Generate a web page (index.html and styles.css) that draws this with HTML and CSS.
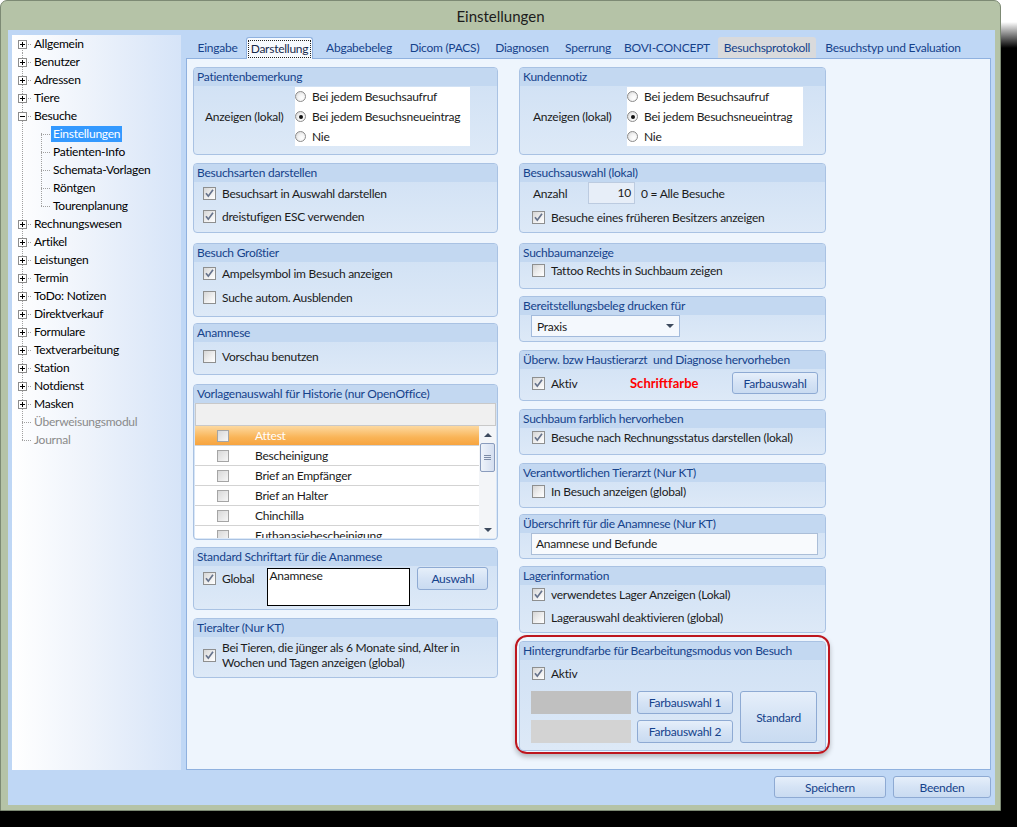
FILE: index.html
```html
<!DOCTYPE html>
<html lang="de">
<head>
<meta charset="utf-8">
<title>Einstellungen</title>
<link rel="stylesheet" href="styles.css">
</head>
<body>
<div class="window">
  <div class="titlebar">Einstellungen</div>
  <div class="client">
    <div class="main">
      <nav class="tree">
        <div class="node"><span class="gut first"><span class="pm"></span></span><span class="lbl">Allgemein</span></div>
        <div class="node"><span class="gut"><span class="pm"></span></span><span class="lbl">Benutzer</span></div>
        <div class="node"><span class="gut"><span class="pm"></span></span><span class="lbl">Adressen</span></div>
        <div class="node"><span class="gut"><span class="pm"></span></span><span class="lbl">Tiere</span></div>
        <div class="node"><span class="gut"><span class="pm minus"></span></span><span class="lbl">Besuche</span></div>
        <div class="node"><span class="gut pass"></span><span class="gut2 cfirst"></span><span class="lbl sel">Einstellungen</span></div>
        <div class="node"><span class="gut pass"></span><span class="gut2"></span><span class="lbl">Patienten-Info</span></div>
        <div class="node"><span class="gut pass"></span><span class="gut2"></span><span class="lbl">Schemata-Vorlagen</span></div>
        <div class="node"><span class="gut pass"></span><span class="gut2"></span><span class="lbl">Röntgen</span></div>
        <div class="node"><span class="gut pass"></span><span class="gut2 last"></span><span class="lbl">Tourenplanung</span></div>
        <div class="node"><span class="gut"><span class="pm"></span></span><span class="lbl">Rechnungswesen</span></div>
        <div class="node"><span class="gut"><span class="pm"></span></span><span class="lbl">Artikel</span></div>
        <div class="node"><span class="gut"><span class="pm"></span></span><span class="lbl">Leistungen</span></div>
        <div class="node"><span class="gut"><span class="pm"></span></span><span class="lbl">Termin</span></div>
        <div class="node"><span class="gut"><span class="pm"></span></span><span class="lbl">ToDo: Notizen</span></div>
        <div class="node"><span class="gut"><span class="pm"></span></span><span class="lbl">Direktverkauf</span></div>
        <div class="node"><span class="gut"><span class="pm"></span></span><span class="lbl">Formulare</span></div>
        <div class="node"><span class="gut"><span class="pm"></span></span><span class="lbl">Textverarbeitung</span></div>
        <div class="node"><span class="gut"><span class="pm"></span></span><span class="lbl">Station</span></div>
        <div class="node"><span class="gut"><span class="pm"></span></span><span class="lbl">Notdienst</span></div>
        <div class="node"><span class="gut"><span class="pm"></span></span><span class="lbl">Masken</span></div>
        <div class="node"><span class="gut"></span><span class="lbl dim">Überweisungsmodul</span></div>
        <div class="node"><span class="gut last"></span><span class="lbl dim">Journal</span></div>
      </nav>

      <div class="tabctl">
        <div class="tabstrip">
          <span class="tab t-eingabe">Eingabe</span>
          <span class="tab t-darst active"><span class="focus">Darstellung</span></span>
          <span class="tab t-abgabe">Abgabebeleg</span>
          <span class="tab t-dicom">Dicom (PACS)</span>
          <span class="tab t-diag">Diagnosen</span>
          <span class="tab t-sperr">Sperrung</span>
          <span class="tab t-bovi">BOVI-CONCEPT</span>
          <span class="tab t-proto hover">Besuchsprotokoll</span>
          <span class="tab t-typ">Besuchstyp und Evaluation</span>
        </div>
        <div class="page">
          <div class="col col-left">
            <section class="grp h88">
              <div class="gh">Patientenbemerkung</div>
              <div class="radiobody">
                <span class="rlabel rl-left">Anzeigen (lokal)</span>
                <div class="rbox">
                  <div class="rrow"><span class="radio"></span>Bei jedem Besuchsaufruf</div>
                  <div class="rrow"><span class="radio on"></span>Bei jedem Besuchsneueintrag</div>
                  <div class="rrow"><span class="radio"></span>Nie</div>
                </div>
              </div>
            </section>

            <section class="grp h70 mt8">
              <div class="gh">Besuchsarten darstellen</div>
              <div class="gb gb-l pt3 gap6">
                <div class="cbrow"><span class="cb on"><svg viewBox="0 0 11 11" width="11" height="11"><path d="M2 5.3 L4.3 8.2 L9 1.8" fill="none" stroke="#66738c" stroke-width="1.7"/></svg></span>Besuchsart in Auswahl darstellen</div>
                <div class="cbrow"><span class="cb on"><svg viewBox="0 0 11 11" width="11" height="11"><path d="M2 5.3 L4.3 8.2 L9 1.8" fill="none" stroke="#66738c" stroke-width="1.7"/></svg></span>dreistufigen ESC verwenden</div>
              </div>
            </section>

            <section class="grp h74 mt10">
              <div class="gh">Besuch Großtier</div>
              <div class="gb gb-l pt3 gap7">
                <div class="cbrow"><span class="cb on"><svg viewBox="0 0 11 11" width="11" height="11"><path d="M2 5.3 L4.3 8.2 L9 1.8" fill="none" stroke="#66738c" stroke-width="1.7"/></svg></span>Ampelsymbol im Besuch anzeigen</div>
                <div class="cbrow"><span class="cb"></span>Suche autom. Ausblenden</div>
              </div>
            </section>

            <section class="grp h52 mt6">
              <div class="gh">Anamnese</div>
              <div class="gb gb-l pt6">
                <div class="cbrow"><span class="cb"></span>Vorschau benutzen</div>
              </div>
            </section>

            <section class="grp h156 mt9">
              <div class="gh">Vorlagenauswahl für Historie (nur OpenOffice)</div>
              <div class="list">
                <div class="lhead"></div>
                <div class="lbody">
                  <div class="lrows">
                    <div class="lrow sel"><span class="lcb"></span><span class="ltext">Attest</span></div>
                    <div class="lrow"><span class="lcb"></span><span class="ltext">Bescheinigung</span></div>
                    <div class="lrow"><span class="lcb"></span><span class="ltext">Brief an Empfänger</span></div>
                    <div class="lrow"><span class="lcb"></span><span class="ltext">Brief an Halter</span></div>
                    <div class="lrow"><span class="lcb"></span><span class="ltext">Chinchilla</span></div>
                    <div class="lrow"><span class="lcb"></span><span class="ltext">Euthanasiebescheinigung</span></div>
                  </div>
                  <div class="vscroll">
                    <span class="sbtn"><span class="tri up"></span></span>
                    <span class="thumb"></span>
                    <span class="strack"></span>
                    <span class="sbtn"><span class="tri down"></span></span>
                  </div>
                </div>
              </div>
            </section>

            <section class="grp h63 mt7">
              <div class="gh">Standard Schriftart für die Ananmese</div>
              <div class="gb gb-l fontrow">
                <div class="cbrow tall"><span class="cb on"><svg viewBox="0 0 11 11" width="11" height="11"><path d="M2 5.3 L4.3 8.2 L9 1.8" fill="none" stroke="#66738c" stroke-width="1.7"/></svg></span>Global</div>
                <div class="fontbox">Anamnese</div>
                <button class="btn b-auswahl">Auswahl</button>
              </div>
            </section>

            <section class="grp h60 mt8">
              <div class="gh">Tieralter (Nur KT)</div>
              <div class="gb gb-l pt3">
                <div class="cbrow two"><span class="cb on"><svg viewBox="0 0 11 11" width="11" height="11"><path d="M2 5.3 L4.3 8.2 L9 1.8" fill="none" stroke="#66738c" stroke-width="1.7"/></svg></span><span>Bei Tieren, die jünger als 6 Monate sind, Alter in<br>Wochen und Tagen anzeigen (global)</span></div>
              </div>
            </section>
          </div>

          <div class="col col-right">
            <section class="grp h88">
              <div class="gh">Kundennotiz</div>
              <div class="radiobody">
                <span class="rlabel rl-right">Anzeigen (lokal)</span>
                <div class="rbox rbox-r">
                  <div class="rrow"><span class="radio"></span>Bei jedem Besuchsaufruf</div>
                  <div class="rrow"><span class="radio on"></span>Bei jedem Besuchsneueintrag</div>
                  <div class="rrow"><span class="radio"></span>Nie</div>
                </div>
              </div>
            </section>

            <section class="grp h70 mt8">
              <div class="gh">Besuchsauswahl (lokal)</div>
              <div class="gb gb-r">
                <div class="anzrow">
                  <span class="anzlabel">Anzahl</span>
                  <span class="numbox">10</span>
                  <span class="anzhint">0 = Alle Besuche</span>
                </div>
                <div class="cbrow mt5"><span class="cb on"><svg viewBox="0 0 11 11" width="11" height="11"><path d="M2 5.3 L4.3 8.2 L9 1.8" fill="none" stroke="#66738c" stroke-width="1.7"/></svg></span>Besuche eines früheren Besitzers anzeigen</div>
              </div>
            </section>

            <section class="grp h46 mt10">
              <div class="gh">Suchbaumanzeige</div>
              <div class="gb gb-r">
                <div class="cbrow"><span class="cb"></span>Tattoo Rechts in Suchbaum zeigen</div>
              </div>
            </section>

            <section class="grp h46 mt7">
              <div class="gh">Bereitstellungsbeleg drucken für</div>
              <div class="gb gb-r11">
                <div class="select"><span>Praxis</span><span class="tri down sel-arrow"></span></div>
              </div>
            </section>

            <section class="grp h51 mt8">
              <div class="gh">Überw. bzw Haustierarzt&nbsp; und Diagnose hervorheben</div>
              <div class="gb gb-r pt3">
                <div class="colorrow">
                  <div class="cbrow aktiv"><span class="cb on"><svg viewBox="0 0 11 11" width="11" height="11"><path d="M2 5.3 L4.3 8.2 L9 1.8" fill="none" stroke="#66738c" stroke-width="1.7"/></svg></span>Aktiv</div>
                  <span class="redtext">Schriftfarbe</span>
                  <button class="btn b-farb">Farbauswahl</button>
                </div>
              </div>
            </section>

            <section class="grp h46 mt8">
              <div class="gh">Suchbaum farblich hervorheben</div>
              <div class="gb gb-r pt1">
                <div class="cbrow"><span class="cb on"><svg viewBox="0 0 11 11" width="11" height="11"><path d="M2 5.3 L4.3 8.2 L9 1.8" fill="none" stroke="#66738c" stroke-width="1.7"/></svg></span>Besuche nach Rechnungsstatus darstellen (lokal)</div>
              </div>
            </section>

            <section class="grp h45 mt8">
              <div class="gh">Verantwortlichen Tierarzt (Nur KT)</div>
              <div class="gb gb-r pt1">
                <div class="cbrow"><span class="cb"></span>In Besuch anzeigen (global)</div>
              </div>
            </section>

            <section class="grp h45 mt6">
              <div class="gh">Überschrift für die Anamnese (Nur KT)</div>
              <div class="gb gb-r11">
                <div class="textin">Anamnese und Befunde</div>
              </div>
            </section>

            <section class="grp h67 mt7">
              <div class="gh">Lagerinformation</div>
              <div class="gb gb-r pt1 gap6">
                <div class="cbrow"><span class="cb on"><svg viewBox="0 0 11 11" width="11" height="11"><path d="M2 5.3 L4.3 8.2 L9 1.8" fill="none" stroke="#66738c" stroke-width="1.7"/></svg></span>verwendetes Lager Anzeigen (Lokal)</div>
                <div class="cbrow"><span class="cb"></span>Lagerauswahl deaktivieren (global)</div>
              </div>
            </section>

            <div class="highlight">
              <section class="grp h110">
                <div class="gh">Hintergrundfarbe für Bearbeitungsmodus von Besuch</div>
                <div class="gb gb-r pt5">
                  <div class="cbrow"><span class="cb on"><svg viewBox="0 0 11 11" width="11" height="11"><path d="M2 5.3 L4.3 8.2 L9 1.8" fill="none" stroke="#66738c" stroke-width="1.7"/></svg></span>Aktiv</div>
                  <div class="bgcolors">
                    <span class="swatch sw1"></span>
                    <button class="btn b-f1">Farbauswahl 1</button>
                    <button class="btn b-std">Standard</button>
                    <span class="swatch sw2"></span>
                    <button class="btn b-f2">Farbauswahl 2</button>
                  </div>
                </div>
              </section>
            </div>
          </div>
        </div>
      </div>
    </div>
    <div class="footer">
      <button class="btn b-save">Speichern</button>
      <button class="btn b-end">Beenden</button>
    </div>
  </div>
</div>
</body>
</html>
```

FILE: styles.css
```css
* { box-sizing: border-box; }
html, body { margin: 0; padding: 0; }
body {
  width: 1017px;
  height: 827px;
  overflow: hidden;
  background: linear-gradient(#ffffff 0, #ffffff 22px, #000000 48px);
  font-family: Lato, "Liberation Sans", sans-serif;
  font-size: 12px;
  letter-spacing: -0.25px;
  color: #1b1b1b;
}

/* window frame */
.window {
  width: 1001px;
  height: 811px;
  background: #b5c3a7;
  border: 1px solid #7d8a74;
  border-radius: 7px 7px 0 0;
  display: flex;
  flex-direction: column;
}
.titlebar {
  height: 29px;
  line-height: 30px;
  text-align: center;
  font-size: 15px;
  letter-spacing: 0;
  color: #1c1c1c;
}
.client {
  margin: 0 5px 0 7px;
  height: 775px;
  background: #bfd7f5;
  padding: 5px 4px 0 4px;
  display: flex;
  flex-direction: column;
}
.main {
  display: flex;
  gap: 5px;
  height: 735px;
}

/* tree */
.tree {
  width: 169px;
  flex: none;
  background: linear-gradient(to right, #ffffff 0%, #eef3fb 45%, #d6e4f8 100%);
  padding-left: 2px;
  color: #000;
}
.node {
  display: flex;
  align-items: center;
  height: 18px;
}
.gut {
  width: 18px;
  height: 18px;
  flex: none;
  display: flex;
  align-items: center;
  padding-left: 4px;
  background-image:
    repeating-linear-gradient(to bottom, #a0a0a0 0 1px, transparent 1px 2px),
    repeating-linear-gradient(to right, #a0a0a0 0 1px, transparent 1px 2px);
  background-repeat: no-repeat;
  background-size: 1px 18px, 10px 1px;
  background-position: 8px 0, 8px 9px;
}
.gut.first { background-size: 1px 9px, 10px 1px; background-position: 8px 9px, 8px 9px; }
.gut.last { background-size: 1px 10px, 10px 1px; background-position: 8px 0, 8px 9px; }
.gut.pass { background-size: 1px 18px, 0 0; }
.gut2 {
  width: 19px;
  height: 18px;
  flex: none;
  background-image:
    repeating-linear-gradient(to bottom, #a0a0a0 0 1px, transparent 1px 2px),
    repeating-linear-gradient(to right, #a0a0a0 0 1px, transparent 1px 2px);
  background-repeat: no-repeat;
  background-size: 1px 18px, 10px 1px;
  background-position: 9px 0, 9px 9px;
}
.gut2.cfirst { background-size: 1px 10px, 10px 1px; background-position: 9px 8px, 9px 9px; }
.gut2.last { background-size: 1px 10px, 10px 1px; background-position: 9px 0, 9px 9px; }
.pm {
  width: 9px;
  height: 9px;
  border: 1px solid #8c8c8c;
  background-color: #fff;
  background-image: linear-gradient(#000, #000), linear-gradient(#000, #000);
  background-size: 5px 1px, 1px 5px;
  background-position: 1px 3px, 3px 1px;
  background-repeat: no-repeat;
}
.pm.minus { background-size: 5px 1px, 0 0; }
.lbl { padding: 0 2px; line-height: 16px; white-space: nowrap; }
.lbl.sel { background: #3399ff; color: #fff; }
.lbl.dim { color: #8a8a8a; }

/* tab control */
.tabctl {
  width: 805px;
  display: flex;
  flex-direction: column;
}
.tabstrip {
  height: 23px;
  padding: 2px 0 0 3px;
  display: flex;
  color: #15428b;
}
.tab {
  height: 21px;
  line-height: 21px;
  text-align: center;
  white-space: nowrap;
  flex: none;
}
.t-eingabe { width: 57px; }
.t-darst { width: 67px; }
.t-abgabe { width: 92px; }
.t-dicom { width: 79px; }
.t-diag { width: 76px; }
.t-sperr { width: 56px; }
.t-bovi { width: 102px; }
.t-proto { width: 98px; }
.t-typ { width: 154px; }
.tab.active {
  position: relative;
  height: 22px;
  background: #f7fafe;
  border: 1px solid #8fb1df;
  border-bottom: none;
  border-radius: 3px 3px 0 0;
  color: #17294a;
  line-height: 20px;
  padding-top: 1px;
}
.focus {
  border: 1px dotted #222;
  padding: 0 2px 1px;
}
.tab.hover {
  background: #d9dadc;
  border-radius: 3px 3px 0 0;
}
.page {
  flex: 1;
  background: #eef5fd;
  border: 1px solid #8fb1df;
  padding: 8px 0 0 6px;
  display: flex;
  gap: 21px;
}
.col { display: flex; flex-direction: column; }
.col-left { width: 305px; }
.col-right { width: 307px; }

/* group boxes */
.grp {
  border: 1px solid #a9c2e3;
  border-radius: 4px;
  background: linear-gradient(#cfe0f4, #dde9f7);
  overflow: hidden;
  display: flex;
  flex-direction: column;
  flex: none;
}
.gh {
  height: 18px;
  line-height: 18px;
  padding-left: 3px;
  background: #c3d8f1;
  color: #15428b;
  white-space: nowrap;
  flex: none;
}
.h45 { height: 45px; }
.h46 { height: 46px; }
.h51 { height: 51px; }
.h52 { height: 52px; }
.h60 { height: 60px; }
.h63 { height: 63px; }
.h67 { height: 67px; }
.h70 { height: 70px; }
.h74 { height: 74px; }
.h88 { height: 88px; }
.h110 { height: 110px; }
.h156 { height: 156px; }
.mt5 { margin-top: 5px; }
.mt6 { margin-top: 6px; }
.mt7 { margin-top: 7px; }
.mt8 { margin-top: 8px; }
.mt9 { margin-top: 9px; }
.mt10 { margin-top: 10px; }

.gb { display: flex; flex-direction: column; }
.gb-l { padding-left: 9px; }
.gb-r { padding-left: 12px; }
.gb-r11 { padding-left: 11px; }
.pt1 { padding-top: 1px; }
.pt3 { padding-top: 3px; }
.pt5 { padding-top: 5px; }
.pt6 { padding-top: 6px; }
.gap6 { gap: 6px; }
.gap7 { gap: 7px; }

.cbrow {
  display: flex;
  align-items: center;
  gap: 6px;
  height: 17px;
  white-space: nowrap;
}
.cbrow.two { height: 30px; line-height: 15px; }
.cb {
  width: 13px;
  height: 13px;
  flex: none;
  border: 1px solid #8e8f8f;
  background: linear-gradient(135deg, #d6d6d6 0%, #efefef 55%, #ffffff 100%);
  display: inline-flex;
}
.cb svg { display: block; }

/* radio groups */
.radiobody {
  display: flex;
  align-items: center;
  margin-top: 1px;
}
.rl-left { width: 101px; padding-left: 11px; }
.rl-right { width: 107px; padding-left: 13px; }
.rlabel { flex: none; white-space: nowrap; }
.rbox {
  width: 175px;
  height: 59px;
  background: #fff;
  display: flex;
  flex-direction: column;
}
.rbox-r { width: 176px; }
.rrow {
  height: 20px;
  display: flex;
  align-items: center;
  gap: 6px;
  white-space: nowrap;
}
.radio {
  width: 11px;
  height: 11px;
  flex: none;
  border-radius: 50%;
  border: 1px solid #8b8b8b;
  background: radial-gradient(circle at 65% 65%, #ffffff 0%, #f2f2f2 45%, #cfcfcf 100%);
  display: inline-flex;
  align-items: center;
  justify-content: center;
}
.radio.on::after {
  content: "";
  width: 4px;
  height: 4px;
  border-radius: 50%;
  background: #111;
}

/* list */
.list {
  margin: 0 1px;
  display: flex;
  flex-direction: column;
}
.lhead {
  height: 23px;
  background: #f0f0f0;
  border: 1px solid #c9c9c9;
}
.lbody {
  height: 112px;
  display: flex;
  background: #fff;
  overflow: hidden;
}
.lrows { flex: 1; }
.lrow {
  height: 20px;
  display: flex;
  align-items: center;
  padding-left: 22px;
  border-bottom: 1px solid #d3d3d3;
  white-space: nowrap;
}
.lrow.sel {
  background: linear-gradient(#fdd9a0, #f9b457 60%, #f7a43f);
  color: #fff;
}
.lcb {
  width: 12px;
  height: 12px;
  flex: none;
  border: 1px solid #a5a5a5;
  background: linear-gradient(135deg, #d8d8d8, #f6f6f6);
  margin-right: 26px;
}
.vscroll {
  width: 17px;
  flex: none;
  background: #f3f5f8;
  display: flex;
  flex-direction: column;
  align-items: center;
}
.sbtn {
  width: 17px;
  height: 17px;
  flex: none;
  display: flex;
  align-items: center;
  justify-content: center;
}
.tri { width: 0; height: 0; border-left: 4px solid transparent; border-right: 4px solid transparent; }
.tri.up { border-bottom: 4px solid #3d4a5e; }
.tri.down { border-top: 4px solid #3d4a5e; }
.thumb {
  width: 15px;
  height: 29px;
  flex: none;
  border: 1px solid #8a9cbd;
  border-radius: 2px;
  background:
    linear-gradient(#7d8ca6, #7d8ca6) center 11px / 7px 1px no-repeat,
    linear-gradient(#7d8ca6, #7d8ca6) center 13px / 7px 1px no-repeat,
    linear-gradient(#7d8ca6, #7d8ca6) center 15px / 7px 1px no-repeat,
    linear-gradient(to right, #eef3fa, #d4def0);
}
.strack { flex: 1; }

/* font row */
.fontrow {
  flex-direction: row;
  align-items: flex-start;
  padding-top: 1px;
}
.cbrow.tall { height: 23px; }
.fontbox {
  width: 143px;
  height: 38px;
  margin: 1px 0 0 13px;
  background: #fff;
  border: 1px solid #000;
  padding: 0 1px;
  line-height: 14px;
  font-size: 12px;
}

/* buttons */
.btn {
  font-family: inherit;
  font-size: 12px;
  letter-spacing: -0.25px;
  color: #15428b;
  border: 1px solid #8eaad3;
  border-radius: 3px;
  background: linear-gradient(#e6effa, #d5e3f5 50%, #c9dbf1);
  padding: 0;
  display: flex;
  align-items: center;
  justify-content: center;
  flex: none;
}
.b-auswahl { width: 71px; height: 23px; margin-left: 7px; }
.b-farb { width: 86px; height: 22px; margin-left: auto; margin-right: 7px; }
.b-save { width: 112px; height: 22px; }
.b-end { width: 98px; height: 22px; }

/* Besuchsauswahl */
.anzrow {
  display: flex;
  align-items: center;
  height: 22px;
}
.anzlabel { width: 56px; padding-left: 1px; }
.numbox {
  width: 47px;
  height: 22px;
  background: #e7eef8;
  border: 1px solid #bccbe0;
  text-align: right;
  padding-right: 3px;
  line-height: 20px;
}
.anzhint { margin-left: 6px; }

/* select */
.select {
  width: 149px;
  height: 22px;
  background: #f4f8fd;
  border: 1px solid #a3bbdc;
  display: flex;
  align-items: center;
  justify-content: space-between;
  padding: 0 5px 0 5px;
}
.sel-arrow { border-top-color: #4a6a9a; border-left-width: 4px; border-right-width: 4px; border-top-width: 5px; }

/* Überw. row */
.colorrow {
  display: flex;
  align-items: center;
  height: 22px;
}
.cbrow.aktiv { width: 98px; }
.redtext {
  color: #ff0000;
  font-weight: bold;
  font-size: 13px;
  letter-spacing: 0;
}

/* text input */
.textin {
  width: 287px;
  height: 22px;
  background: #f8fafd;
  border: 1px solid #abbed8;
  line-height: 20px;
  padding-left: 4px;
}

/* highlight outline */
.highlight {
  margin: 2px -4px 0;
  padding: 4px 2px 1px;
  border: 2px solid #bd161e;
  border-radius: 12px;
  box-shadow: 0 3px 5px rgba(0, 0, 0, 0.25);
}
.bgcolors {
  display: grid;
  grid-template-columns: 100px 96px 78px;
  grid-template-rows: 23px 23px;
  column-gap: 6px;
  row-gap: 6px;
  margin: 9px 0 0 -1px;
}
.swatch { display: block; }
.sw1 { background: #c0c0c0; grid-column: 1; grid-row: 1; }
.sw2 { background: #d3d3d3; grid-column: 1; grid-row: 2; }
.b-f1 { grid-column: 2; grid-row: 1; }
.b-f2 { grid-column: 2; grid-row: 2; }
.b-std { grid-column: 3; grid-row: 1 / span 2; margin-left: 1px; }

/* footer */
.footer {
  margin-top: 6px;
  height: 22px;
  display: flex;
  justify-content: flex-end;
  gap: 7px;
  padding-right: 0;
}
```
